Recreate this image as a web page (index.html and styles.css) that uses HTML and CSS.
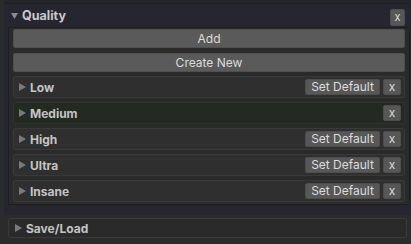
FILE: index.html
```html
<!DOCTYPE html>
<html>
<head>
<meta charset="utf-8">
<link rel="stylesheet" href="styles.css">
</head>
<body>
<div class="topstrip"></div>
<div class="panel">
  <div class="panel-head">
    <svg class="tri-down" width="7" height="6" viewBox="0 0 7 6"><path d="M0 0H7L3.5 6Z"/></svg>
    <span class="title">Quality</span>
    <button class="btn close">x</button>
  </div>
  <div class="content">
    <button class="btn wide">Add</button>
    <button class="btn wide">Create New</button>
    <div class="row">
      <svg class="tri" width="7" height="8" viewBox="0 0 7 8"><path d="M0 0L7 4L0 8Z"/></svg><span class="label">Low</span>
      <button class="btn small">Set Default</button><button class="btn small x">x</button>
    </div>
    <div class="row active">
      <svg class="tri" width="7" height="8" viewBox="0 0 7 8"><path d="M0 0L7 4L0 8Z"/></svg><span class="label">Medium</span>
      <button class="btn small x">x</button>
    </div>
    <div class="row">
      <svg class="tri" width="7" height="8" viewBox="0 0 7 8"><path d="M0 0L7 4L0 8Z"/></svg><span class="label">High</span>
      <button class="btn small">Set Default</button><button class="btn small x">x</button>
    </div>
    <div class="row">
      <svg class="tri" width="7" height="8" viewBox="0 0 7 8"><path d="M0 0L7 4L0 8Z"/></svg><span class="label">Ultra</span>
      <button class="btn small">Set Default</button><button class="btn small x">x</button>
    </div>
    <div class="row">
      <svg class="tri" width="7" height="8" viewBox="0 0 7 8"><path d="M0 0L7 4L0 8Z"/></svg><span class="label">Insane</span>
      <button class="btn small">Set Default</button><button class="btn small x">x</button>
    </div>
  </div>
</div>
<div class="saveload">
  <svg class="tri" width="7" height="8" viewBox="0 0 7 8"><path d="M0 0L7 4L0 8Z"/></svg><span class="label">Save/Load</span>
</div>
</body>
</html>
```
FILE: styles.css
```css
html, body {
  margin: 0;
  padding: 0;
  background: #2b2b2b;
  font-family: Inter, "Noto Sans", sans-serif;
  font-size: 12px;
  color: #c8c8c8;
  width: 411px;
  height: 244px;
  overflow: hidden;
}
.topstrip {
  height: 3px;
  margin-left: 4px;
  background: #232329;
  border-bottom: 1px solid #1f1f1f;
}
.panel {
  margin-left: 4px;
  background: #262631;
  padding-bottom: 10px;
}
.panel-head {
  height: 23px;
  display: flex;
  align-items: center;
  padding-left: 7px;
  padding-right: 6px;
}
.tri-down {
  fill: #8a8a92;
  margin-right: 4px;
  margin-top: 1px;
}
.title {
  font-weight: 700;
  font-size: 12.5px;
  color: #c8c8cc;
  flex: 1;
}
.btn {
  font-family: Inter, "Noto Sans", sans-serif;
  background: #575757;
  color: #dcdcdc;
  border: 1px solid #4d4d4d;
  border-radius: 2px;
  font-size: 12px;
  padding: 0;
  margin: 0;
}
.close {
  width: 15px;
  height: 17px;
  margin-top: 3px;
  font-size: 11px;
}
.content {
  margin-left: 4px;
  margin-right: 1px;
  border: 1px solid #1e1e20;
  background: #2a2a2a;
  padding: 1px 4px 2px 4px;
  display: flex;
  flex-direction: column;
  gap: 4px;
}
.wide {
  height: 19px;
  display: block;
  width: 100%;
  background: #5a5a5a;
  border-color: #4f4f4f;
}
.wide + .wide { margin-top: 1px; }
.row {
  height: 22px;
  box-sizing: border-box;
  background: #2f2f2f;
  border: 1px solid #393939;
  border-radius: 2px;
  display: flex;
  align-items: center;
  padding-left: 5px;
  padding-right: 3px;
  gap: 3px;
}
.row.active {
  background: #222a22;
  border-color: #2c342c;
}
.tri {
  fill: #7a7a7a;
  flex: none;
}
.label {
  font-weight: 700;
  font-size: 12px;
  color: #c4c4c4;
  flex: 1;
  margin-left: 1px;
}
.small {
  height: 16px;
  width: 75px;
  font-size: 12px;
  line-height: 14px;
}
.small.x {
  width: 18px;
}
.saveload {
  margin: 3px 4px 0 8px;
  height: 20px;
  box-sizing: border-box;
  border: 1px solid #3a3a3a;
  border-radius: 2px;
  background: #2a2a2a;
  display: flex;
  align-items: center;
  padding-left: 6px;
  gap: 3px;
}
```
